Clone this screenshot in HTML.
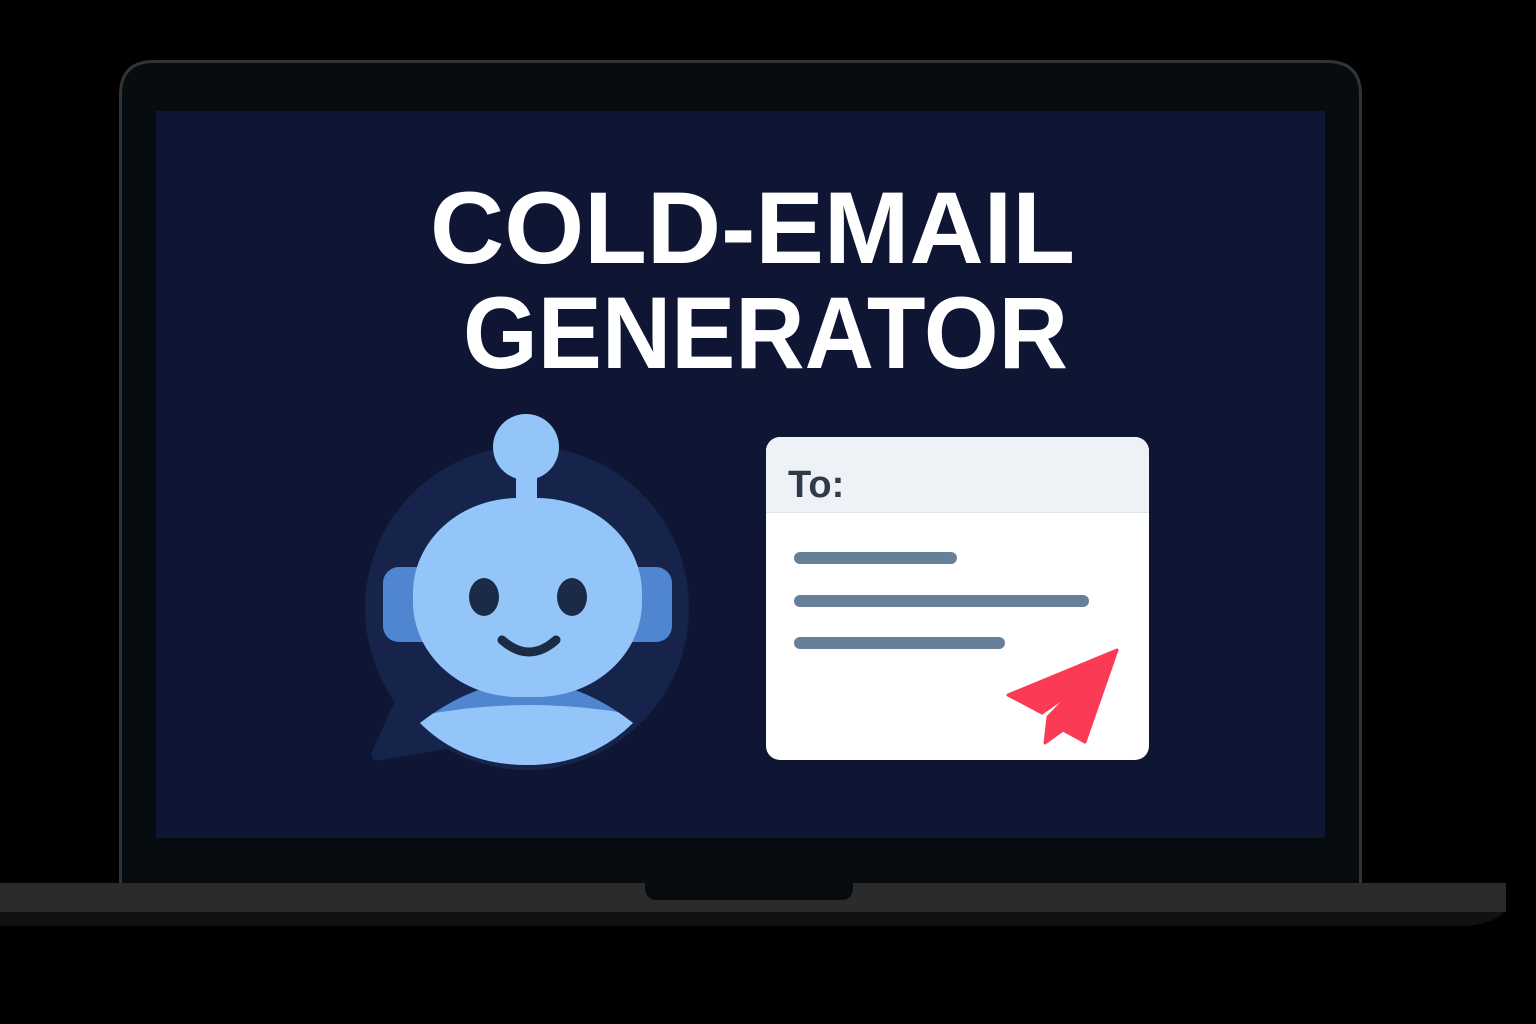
<!DOCTYPE html>
<html><head><meta charset="utf-8"><style>
html,body{margin:0;padding:0;background:#000;}
svg{display:block}
</style></head><body>
<svg width="1536" height="1024" viewBox="0 0 1536 1024" xmlns="http://www.w3.org/2000/svg">
<rect width="1536" height="1024" fill="#000"/>
<path d="M120.5,883 L120.5,95 Q120.5,61.5 154,61.5 L1327,61.5 Q1360.5,61.5 1360.5,95 L1360.5,883" fill="#060c10" stroke="#333" stroke-width="3"/>
<rect x="156" y="111" width="1169" height="727" fill="#0e1633"/>
<path d="M0,926 L1470,926 Q1506,920 1506,905 L1506,883 L0,883 Z" fill="#111"/>
<rect x="0" y="883" width="1506" height="29" fill="#2b2b2b"/>
<path d="M645,883 L853,883 L853,888 Q853,900 840,900 L658,900 Q645,900 645,888 Z" fill="#050b0f"/>
<g font-family="Liberation Sans, sans-serif" font-weight="bold" fill="#fff" font-size="102">
<text x="430" y="263" textLength="645" lengthAdjust="spacingAndGlyphs">COLD-EMAIL</text>
<text x="463" y="368" textLength="605" lengthAdjust="spacingAndGlyphs">GENERATOR</text>
</g>
<circle cx="527" cy="608" r="162" fill="#16244b"/>
<path d="M400,690 L372,752 Q370,762 382,760 L470,745 Z" fill="#16244b"/>
<rect x="383" y="567" width="60" height="75" rx="16" fill="#4f86cf"/>
<rect x="612" y="567" width="60" height="75" rx="16" fill="#4f86cf"/>
<rect x="516" y="470" width="21" height="35" fill="#93c5f9"/>
<circle cx="526" cy="447" r="33" fill="#93c5f9"/>
<clipPath id="b"><path d="M420,723 Q527,640 633,723 Q590,765 527,765 Q462,765 420,723 Z"/></clipPath>
<g clip-path="url(#b)">
<rect x="400" y="660" width="260" height="120" fill="#4f86cf"/>
<path d="M400,720 Q527,690 660,720 L660,780 L400,780 Z" fill="#93c5f9"/>
</g>
<rect x="413" y="498" width="229" height="199" rx="105" ry="95" fill="#93c5f9"/>
<ellipse cx="484" cy="597" rx="15" ry="19" fill="#1b2a45"/>
<ellipse cx="572" cy="597" rx="15" ry="19" fill="#1b2a45"/>
<path d="M502,640 Q529,664 556,640" fill="none" stroke="#1b2a45" stroke-width="9" stroke-linecap="round"/>
<clipPath id="c"><rect x="766" y="437" width="383" height="323" rx="14"/></clipPath>
<g clip-path="url(#c)">
<rect x="766" y="437" width="383" height="323" fill="#fff"/>
<rect x="766" y="437" width="383" height="76" fill="#eef2f7"/>
<rect x="766" y="512" width="383" height="1" fill="#dde3ec"/>
</g>
<text x="788" y="497" font-family="Liberation Sans, sans-serif" font-weight="bold" font-size="38" fill="#2f3a4a">To:</text>
<g stroke="#67809a" stroke-width="12" stroke-linecap="round">
<line x1="800" y1="558" x2="951" y2="558"/>
<line x1="800" y1="601" x2="1083" y2="601"/>
<line x1="800" y1="643" x2="999" y2="643"/>
</g>
<path d="M1117,650 L1008,695 L1042,713 L1072,692 L1048,717 L1045,743 L1063,730 L1085,742 Z" fill="#fb3a55" stroke="#fb3a55" stroke-width="3" stroke-linejoin="round"/>
</svg>
</body></html>
